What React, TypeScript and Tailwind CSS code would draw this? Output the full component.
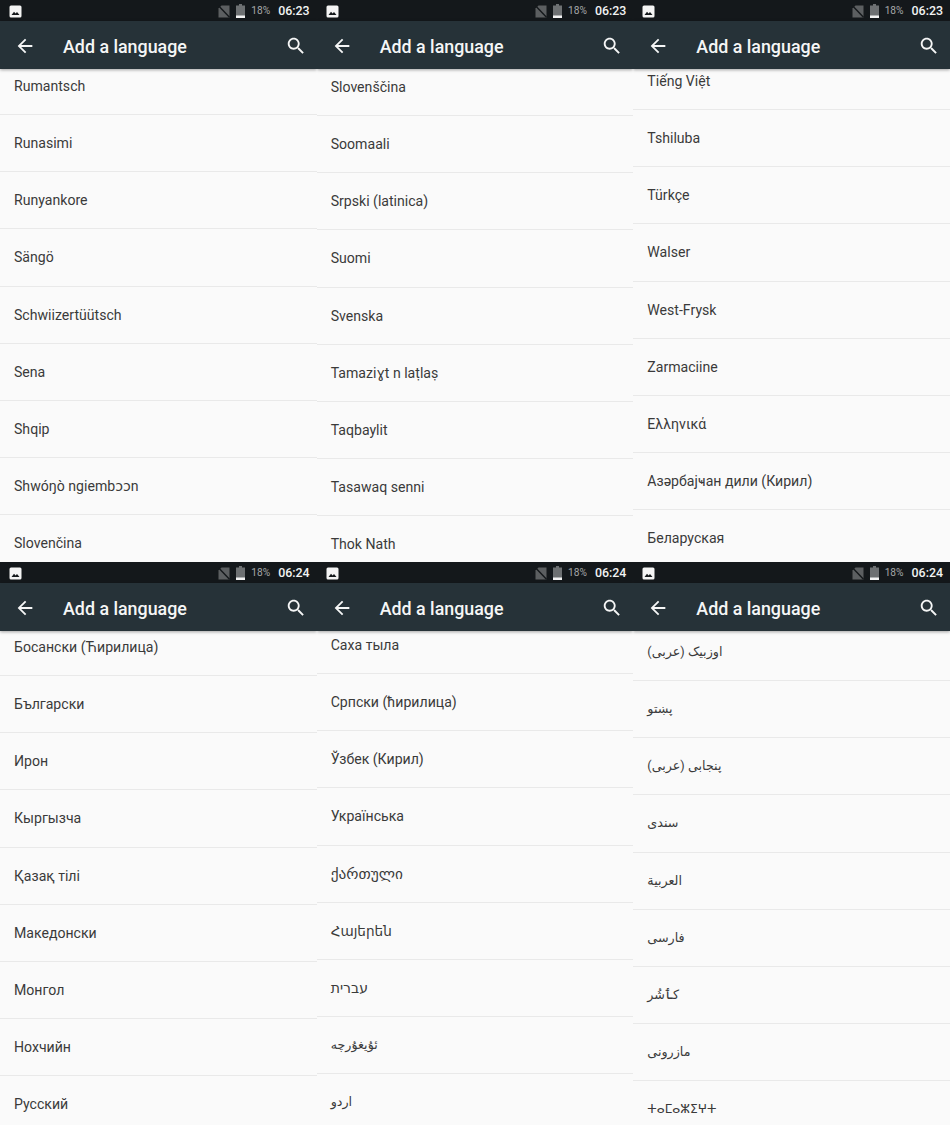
const ARROW = "M20 11H7.83l5.59-5.59L12 4l-8 8 8 8 1.41-1.41L7.83 13H20v-2z";
const SEARCH = "M15.5 14h-.79l-.28-.27C15.41 12.59 16 11.11 16 9.5 16 5.91 13.09 3 9.5 3S3 5.91 3 9.5 5.91 16 9.5 16c1.61 0 3.09-.59 4.23-1.57l.27.28v.79l5 4.99L20.49 19l-4.99-5zm-6 0C7.01 14 5 11.99 5 9.5S7.01 5 9.5 5 14 7.01 14 9.5 11.99 14 9.5 14z";

type Item = string | { t: string; c: string };
type Screen = { time: string; offset: string; items: Item[] };

const AR = "text-[12.7px]";

const screens: Screen[] = [
  { time: "06:23", offset: "-mt-[12px]", items: ["Rumantsch", "Runasimi", "Runyankore", "Sängö", "Schwiizertüütsch", "Sena", "Shqip", "Shwóŋò ngiembɔɔn", "Slovenčina"] },
  { time: "06:23", offset: "-mt-[11px]", items: ["Slovenščina", "Soomaali", "Srpski (latinica)", "Suomi", "Svenska", "Tamaziɣt n laṭlaṣ", "Taqbaylit", "Tasawaq senni", "Thok Nath"] },
  { time: "06:23", offset: "-mt-[17px]", items: ["Tiếng Việt", "Tshiluba", "Türkçe", "Walser", "West-Frysk", "Zarmaciine", "Ελληνικά", "Азәрбајҹан дили (Кирил)", "Беларуская"] },
  { time: "06:24", offset: "-mt-[13px]", items: ["Босански (Ћирилица)", "Български", "Ирон", "Кыргызча", "Қазақ тілі", "Македонски", "Монгол", "Нохчийн", "Русский"] },
  { time: "06:24", offset: "-mt-[15px]", items: ["Саха тыла", "Српски (ћирилица)", "Ўзбек (Кирил)", "Українська", { t: "ქართული", c: "text-[15.3px]" }, { t: "Հայերեն", c: "text-[13.6px]" }, "עברית", { t: "ئۇيغۇرچە", c: AR }, { t: "اردو", c: AR }] },
  { time: "06:24", offset: "-mt-[8px]", items: [{ t: "اوزبیک (عربی)", c: AR }, { t: "پښتو", c: AR }, { t: "پنجابی (عربی)", c: AR }, { t: "سندی", c: AR }, { t: "العربية", c: AR }, { t: "فارسی", c: AR }, { t: "کٲشُر", c: AR }, { t: "مازرونی", c: AR }, { t: "ⵜⴰⵎⴰⵣⵉⵖⵜ", c: "text-[12.3px]" }] },
];

const isRtl = (s: string) => /[\u0590-\u06FF]/.test(s);

function StatusBar({ time }: { time: string }) {
  return (
    <div className="h-[21px] shrink-0 bg-[#14181b] flex items-center pt-[1px] pl-[9px] pr-[7px]">
      <svg width="13" height="13" viewBox="0 0 13 13" className="shrink-0">
        <rect x="0.5" y="0.5" width="12" height="12" rx="1.5" fill="#f4f4f4" />
        <path d="M2.5 10 L5 6.8 L6.6 8.6 L8 7 L10.5 10 Z" fill="#14181b" />
      </svg>
      <div className="flex-1" />
      <svg width="12" height="13" viewBox="0 0 12 13" className="shrink-0">
        <path d="M3.5 0.5H11.5V12.5H0.5V3.5Z" fill="#5c5f61" />
        <path d="M0.5 0.8 L11.5 12.2" stroke="#14181b" strokeWidth="1.4" />
      </svg>
      <svg width="9" height="14" viewBox="0 0 9 14" className="ml-[6px] shrink-0">
        <path d="M3 0H6V1.5H9V14H0V1.5H3Z" fill="#6d7072" />
        <rect x="0" y="11.5" width="9" height="2.5" fill="#f4f4f4" />
      </svg>
      <span className="ml-[6px] text-[10.2px] leading-none text-[#a6a8a9]">18%</span>
      <span className="ml-[8px] text-[12.4px] leading-none font-medium text-[#f2f3f3]">{time}</span>
    </div>
  );
}

function Toolbar() {
  return (
    <div className="relative z-10 h-[48px] shrink-0 bg-[#263238] flex items-center shadow-[0_1px_3px_rgba(0,0,0,0.35)] text-white">
      <svg width="22" height="22" viewBox="0 0 24 24" className="ml-[14px] shrink-0 mt-[2px]" fill="#f5f6f6">
        <path d={ARROW} />
      </svg>
      <span className="ml-[27px] mt-[4px] text-[17.85px] leading-none font-medium text-[#f5f6f6]">Add a language</span>
      <div className="flex-1" />
      <svg width="22" height="22" viewBox="0 0 24 24" className="mr-[10px] shrink-0 mt-[1px]" fill="#f5f6f6">
        <path d={SEARCH} />
      </svg>
    </div>
  );
}

function Phone({ s }: { s: Screen }) {
  return (
    <div className="h-full flex flex-col overflow-hidden bg-[#fafafa]">
      <StatusBar time={s.time} />
      <Toolbar />
      <div className={`pt-[1px] ${s.offset}`}>
        {s.items.map((item) => {
          const text = typeof item === "string" ? item : item.t;
          const size = typeof item === "string" ? "text-[14.1px]" : item.c;
          return (
            <div key={text} className="h-[57.125px] border-b border-[#e9e9e9] pl-[14px] flex items-center justify-start">
              <span dir={isRtl(text) ? "rtl" : "ltr"} className={`inline-block leading-5 text-[#3a3a3a] ${size}`}>
                {text}
              </span>
            </div>
          );
        })}
      </div>
    </div>
  );
}

export default function App() {
  return (
    <div
      className="w-[950px] h-[1125px] overflow-hidden grid grid-cols-3 grid-rows-[562px_563px] bg-[#fafafa]"
      style={{ fontFamily: 'Roboto, "DejaVu Sans", "Noto Sans", sans-serif' }}
    >
      {screens.map((s, i) => (
        <Phone key={i} s={s} />
      ))}
    </div>
  );
}
